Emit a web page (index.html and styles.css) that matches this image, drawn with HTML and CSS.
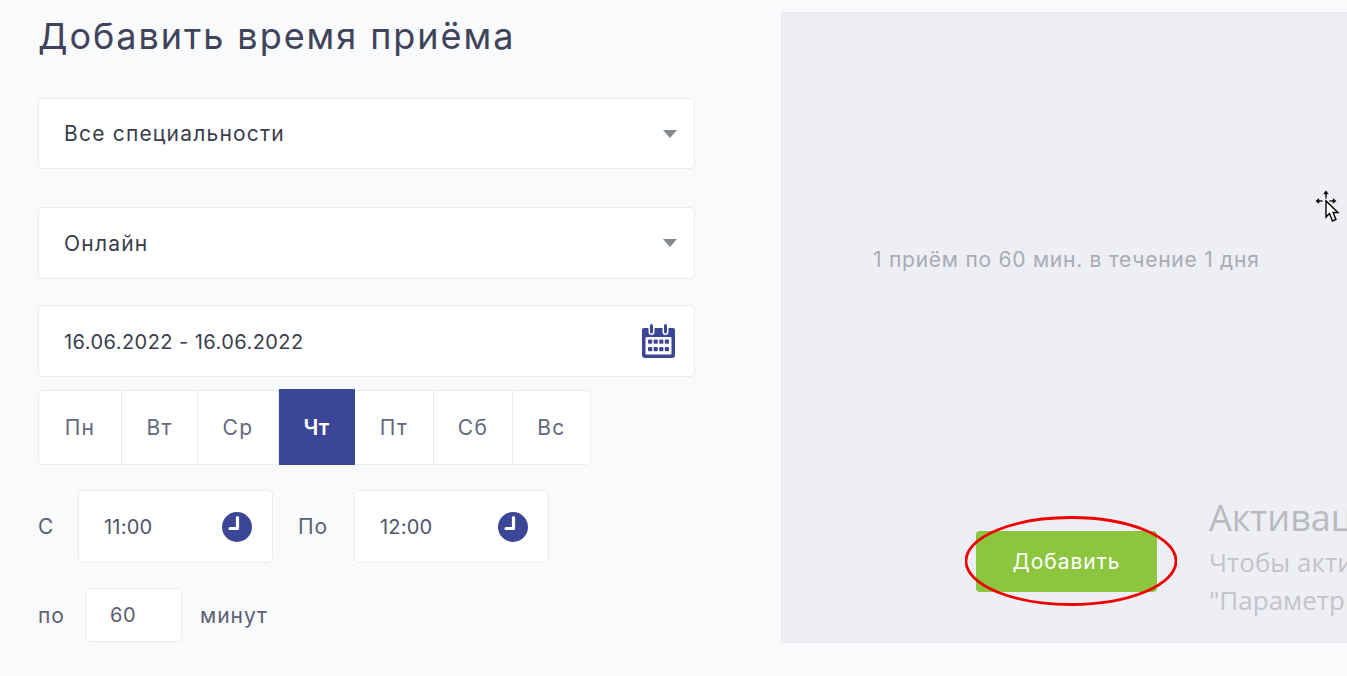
FILE: index.html
```html
<!DOCTYPE html>
<html lang="ru">
<head>
<meta charset="utf-8">
<title>Добавить время приёма</title>
<link rel="stylesheet" href="styles.css">
</head>
<body>
<main class="page">
  <section class="form">
    <h1 class="title">Добавить время приёма</h1>
    <div class="field select first"><span>Все специальности</span><i class="caret"></i></div>
    <div class="field select second"><span>Онлайн</span><i class="caret"></i></div>
    <div class="field date">
      <span>16.06.2022 - 16.06.2022</span>
      <svg class="cal" viewBox="0 0 33 34" width="33" height="34">
        <path fill="#3c4696" d="M3 4h28a2 2 0 0 1 2 2v25a3 3 0 0 1-3 3H3a3 3 0 0 1-3-3V6a2 2 0 0 1 2-2z"/>
        <rect x="3.500" y="13" width="26" height="17.500" rx="1" fill="#fff"/>
        <rect x="6.500" y="-0.500" width="6" height="11.500" rx="3" fill="#fff"/>
        <rect x="20.500" y="-0.500" width="6" height="11.500" rx="3" fill="#fff"/>
        <rect x="8" y="0" width="3" height="9.500" rx="1.500" fill="#3c4696"/>
        <rect x="22" y="0" width="3" height="9.500" rx="1.500" fill="#3c4696"/>
        <g fill="#3c4696">
          <rect x="6" y="15.500" width="4.200" height="4.200" rx="1"/><rect x="11.600" y="15.500" width="4.200" height="4.200" rx="1"/><rect x="17.200" y="15.500" width="4.200" height="4.200" rx="1"/><rect x="22.800" y="15.500" width="4.200" height="4.200" rx="1"/>
          <rect x="6" y="23" width="4.200" height="4.200" rx="1"/><rect x="11.600" y="23" width="4.200" height="4.200" rx="1"/><rect x="17.200" y="23" width="4.200" height="4.200" rx="1"/><rect x="22.800" y="23" width="4.200" height="4.200" rx="1"/>
        </g>
      </svg>
    </div>
    <div class="days">
      <div class="day">Пн</div><div class="day">Вт</div><div class="day">Ср</div>
      <div class="day active">Чт</div>
      <div class="day">Пт</div><div class="day">Сб</div><div class="day">Вс</div>
    </div>
    <div class="times">
      <label class="lbl lbl-from">С</label>
      <div class="field time"><span>11:00</span>
        <svg class="clock" viewBox="0 0 30 30" width="30" height="30"><circle cx="15" cy="15" r="15" fill="#3c4696"/><path d="M15.500 5.500V16.500H8" fill="none" stroke="#fff" stroke-width="3.200" stroke-linecap="round" stroke-linejoin="round"/></svg>
      </div>
      <label class="lbl lbl-to">По</label>
      <div class="field time"><span>12:00</span>
        <svg class="clock" viewBox="0 0 30 30" width="30" height="30"><circle cx="15" cy="15" r="15" fill="#3c4696"/><path d="M15.500 5.500V16.500H8" fill="none" stroke="#fff" stroke-width="3.200" stroke-linecap="round" stroke-linejoin="round"/></svg>
      </div>
    </div>
    <div class="duration">
      <label class="lbl">по</label>
      <div class="field mins"><span>60</span></div>
      <label class="lbl">минут</label>
    </div>
  </section>
  <section class="panel">
    <p class="summary">1 приём по 60 мин. в течение 1 дня</p>
    <div class="foot">
      <button class="add" type="button">Добавить</button>
      <div class="activate">
        <div class="act-title">Активация Windows</div>
        <div class="act-text">Чтобы активировать Windows, перейдите в раздел</div>
        <div class="act-text">"Параметры".</div>
      </div>
    </div>
    <svg class="ring" viewBox="0 0 212 90" width="212" height="90"><ellipse cx="106" cy="45" rx="105" ry="43.500" fill="none" stroke="#f00000" stroke-width="2.800"/></svg>
  </section>
</main>
<svg class="cursor" viewBox="0 0 26 36" width="26" height="36">
  <path d="M12 1l3.500 4.500H13V10h-2V5.500H8.500z M1 12l4.500-3.500V11H9v2H5.500v2.500z M23 12l-4.500-3.500V11H15v2h3.500v2.500z" fill="#000" stroke="#fff" stroke-width=".7"/>
  <path d="M12 12v16l3.500-3.500 3 7.500 3.500-1.500-3-7h5z" fill="#fff" stroke="#000" stroke-width="1.400"/>
</svg>
</body>
</html>
```
FILE: styles.css
```css
* { box-sizing: border-box; }
html, body { margin: 0; height: 100%; overflow: hidden; }
body { background: #f9fafc; font-family: Inter, "Open Sans", "Liberation Sans", sans-serif; color: #3a3f55; position: relative; }
.page { display: flex; align-items: flex-start; height: 676px; }
.form { width: 657px; margin-left: 38px; flex: none; display: flex; flex-direction: column; }
.title { margin: 12px 0 0; height: 49px; line-height: 49px; font-size: 36px; font-weight: 400; color: #40435a; letter-spacing: 1.950px; white-space: nowrap; }
.field { background: #fff; border: 1px solid #e9ebef; border-radius: 5px; display: flex; align-items: center; font-size: 21px; letter-spacing: 1.200px; color: #3a3d4e; }
.select, .date { justify-content: space-between; padding: 0 17px 0 25px; }
.first { margin-top: 37px; height: 71px; }
.second { margin-top: 38px; height: 72px; }
.date { margin-top: 26px; height: 72px; padding-right: 19px; font-size: 20px; letter-spacing: .45px; }
.date span { padding-top: 2px; }
.caret { width: 0; height: 0; border-left: 7.500px solid transparent; border-right: 7.500px solid transparent; border-top: 8px solid #84888f; }
.cal { flex: none; margin-top: -1px; overflow: visible; }
.days { display: grid; grid-template-columns: 84px 76px 81px 76px 79px 79px 78px; width: 553px; height: 75px; margin-top: 13px; }
.day { background: #fff; border: 1px solid #eaecf0; border-left-width: 0; display: flex; align-items: center; justify-content: center; font-size: 21px; letter-spacing: 1.300px; color: #646880; }
.day:first-child { border-left-width: 1px; border-radius: 5px 0 0 5px; }
.day:last-child { border-radius: 0 5px 5px 0; }
.day.active { background: #3c4696; border-color: #3c4696; color: #fff; font-weight: 600; letter-spacing: .2px; margin-top: -1px; height: 76px; }
.times { display: flex; align-items: center; margin-top: 25px; height: 73px; }
.lbl { font-size: 21px; letter-spacing: 1px; color: #5c6074; }
.lbl-from { width: 40px; }
.lbl-to { width: 56px; margin-left: 25px; }
.time { width: 195px; height: 73px; justify-content: space-between; padding: 0 20px 0 25px; font-size: 20px; letter-spacing: .2px; }
.time span { color: #50536a; }
.duration { display: flex; align-items: center; margin-top: 25px; height: 54px; }
.duration .lbl:first-child { width: 47px; }
.mins { width: 97px; height: 54px; padding-left: 24px; font-size: 20px; letter-spacing: .5px; }
.mins span { color: #5c6074; }
.duration .lbl:last-child { margin-left: 18px; }
.panel { flex: none; width: 700px; height: 631px; margin: 12px 0 0 86px; background: #eeeff5; border: 1px solid #e8e9ee; position: relative; display: flex; flex-direction: column; overflow: hidden; }
.summary { margin: 235px 0 0 91px; font-size: 21px; line-height: 24px; letter-spacing: .75px; color: #a9abb5; white-space: nowrap; }
.foot { display: flex; margin: 221px 0 0 194px; align-items: flex-start; }
.add { width: 181px; height: 61px; margin-top: 38px; flex: none; border: 0; border-radius: 4px; background: #8cc63f; color: #fff; font: 400 21px Inter, sans-serif; letter-spacing: 1px; }
.activate { margin-left: 52px; font-family: "Open Sans", sans-serif; font-weight: 400; color: #c3c4ca; white-space: nowrap; }
.act-title { font-size: 36px; line-height: 50px; color: #b9babf; }
.act-text { font-size: 26px; line-height: 38px; }
.ring { position: absolute; left: 183px; top: 503px; }
.cursor { position: absolute; left: 1314px; top: 189px; }
```
